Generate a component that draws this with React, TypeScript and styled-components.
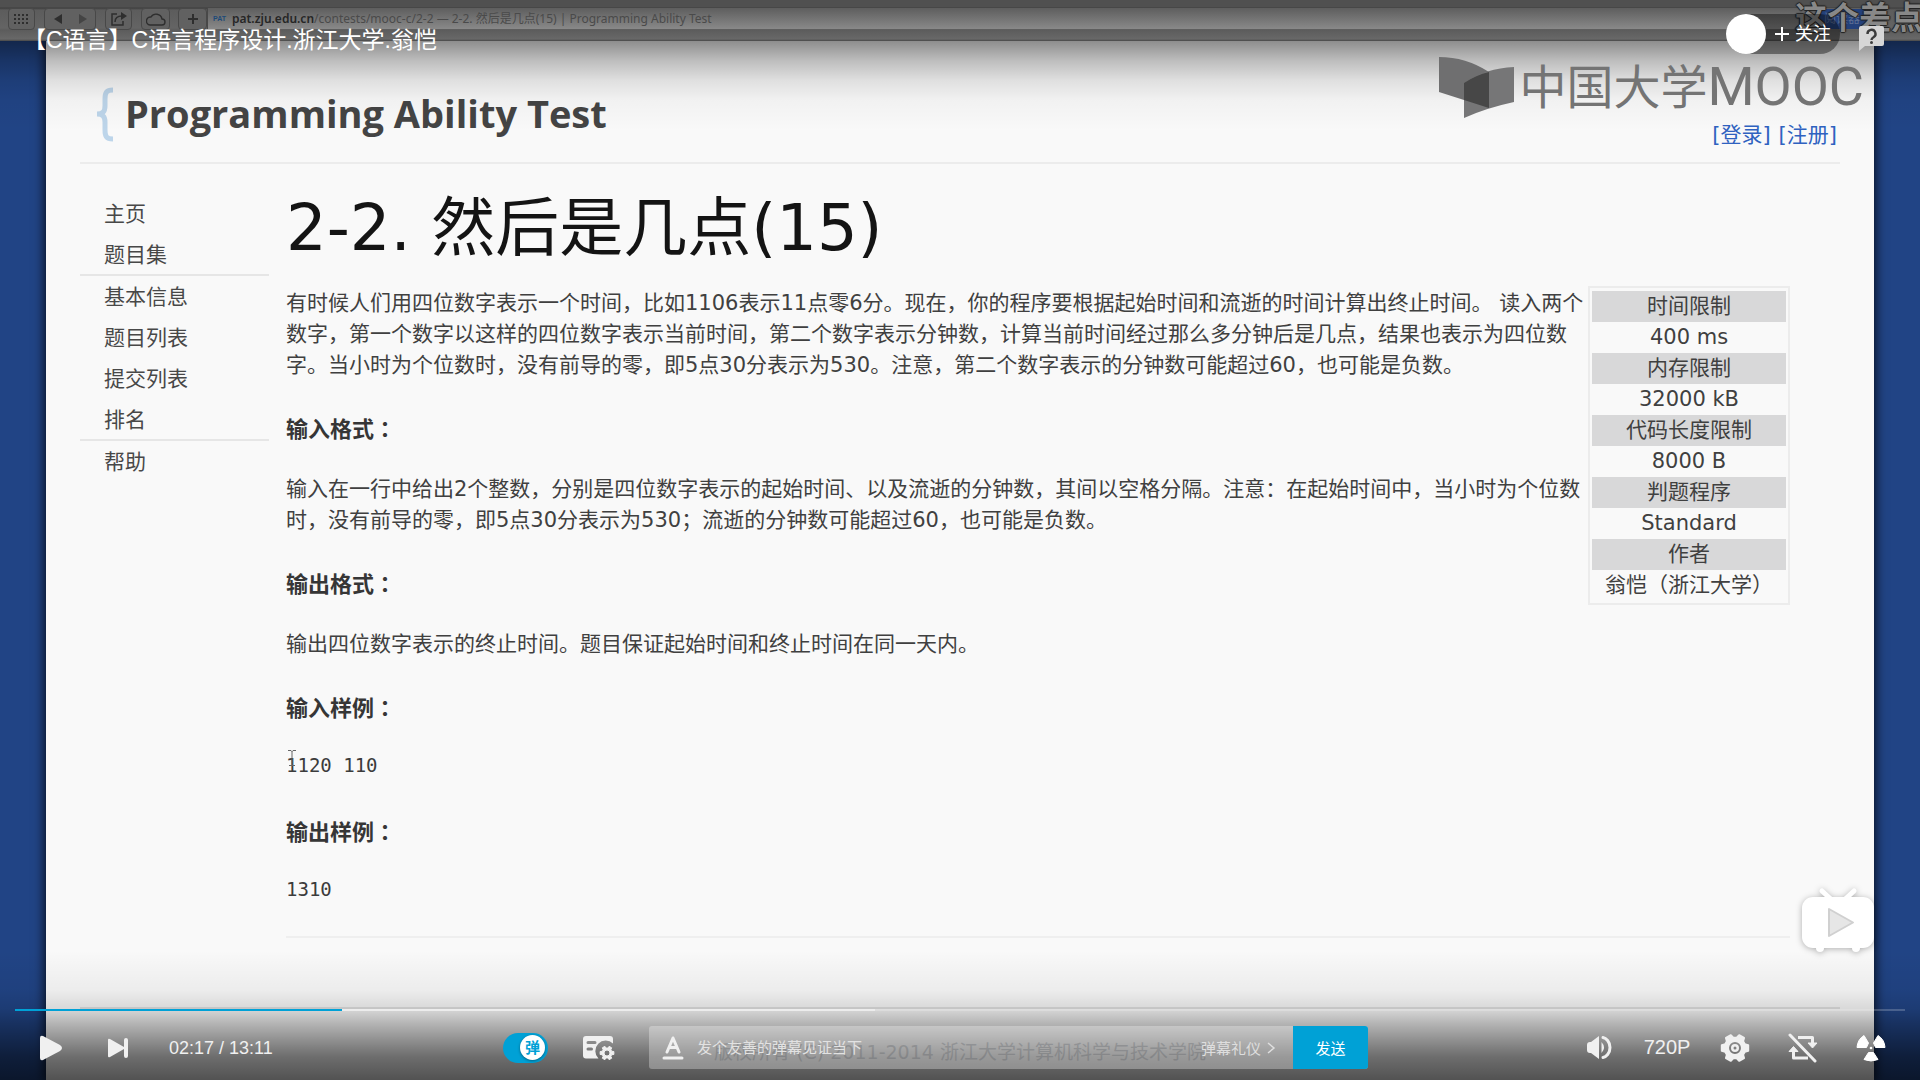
import React, { useState } from "react";
import styled, { createGlobalStyle } from "styled-components";

const videoFont = `"DejaVu Sans", "Noto Sans CJK SC", sans-serif`;
const uiFont = `"Liberation Sans", "Noto Sans CJK SC", sans-serif`;
const accent = "#00a1d6";

const GlobalStyle = createGlobalStyle`
  *, *::before, *::after { box-sizing: border-box; }
  body { margin: 0; background: #000; }
  button, input { font: inherit; color: inherit; border: 0; padding: 0; margin: 0; background: none; }
  button { cursor: pointer; }
  a { text-decoration: none; color: inherit; }
  h1, h2, h3, p, pre, ul { margin: 0; padding: 0; }
`;

/* ---------- video picture ---------- */

const Player = styled.main`
  position: relative;
  min-height: 100vh;
  overflow: hidden;
  display: flex;
  flex-direction: column;
  font-family: ${uiFont};
`;

const Browser = styled.section`
  flex: 1;
  display: flex;
  flex-direction: column;
  background: #214485;
  font-family: ${videoFont};
`;

const BrowserBar = styled.div`
  height: 41px;
  padding-top: 8px;
  display: flex;
  align-items: flex-start;
  background: linear-gradient(#505050 0, #505050 7px, #3e3e3e 8px, #5c5c5c 10px, #646464 28px, #5c5c5c 30px, #686868 39px, #484848 41px);
`;

const BarButton = styled.span<{ $width: number; $gap: number }>`
  width: ${(p) => p.$width}px;
  height: 22px;
  margin-left: ${(p) => p.$gap}px;
  border: 1px solid #484848;
  border-radius: 4px;
  background: #616161;
  display: flex;
  align-items: center;
  justify-content: space-around;
  color: #2e2e2e;
`;

const Address = styled.div`
  flex: 1;
  height: 21px;
  margin-right: 54px;
  padding-left: 5px;
  display: flex;
  align-items: center;
  gap: 6px;
  background: linear-gradient(#5e5e5e, #898989);
  border-left: 1px solid #484848;
  font: 12px/20px "Noto Sans", "Noto Sans CJK SC", sans-serif;
  color: #4a4a4a;
  white-space: nowrap;
  overflow: hidden;
`;

const Favicon = styled.b`
  font: bold 7px/10px "Liberation Sans", sans-serif;
  color: #1d4a78;
`;

const Host = styled.b`
  font-weight: 600;
  color: #262626;
`;

const Reader = styled.span`
  width: 48px;
  margin-left: auto;
  background: #24417b;
  color: #5d6f94;
  text-align: center;
`;

const Desktop = styled.div`
  flex: 1;
  display: flex;
  padding: 0 46px;
  background: #214485;
  overflow: hidden;
`;

const Page = styled.div`
  flex: 1;
  min-width: 0;
  padding: 0 34px;
  display: flex;
  flex-direction: column;
  background: #f9f9f9;
  box-shadow: 0 0 10px 2px rgba(0, 0, 0, 0.75);
`;

const PageHeader = styled.header`
  height: 123px;
  padding: 38px 0 0 13px;
  display: flex;
  justify-content: space-between;
  border-bottom: 2px solid #ececec;
`;

const Brand = styled.div`
  display: flex;
  align-items: flex-start;
  gap: 8px;
  color: #444;
`;

const BrandName = styled.h2`
  font: bold 38px/68px "Open Sans", sans-serif;
`;

const Account = styled.nav`
  display: flex;
  gap: 8px;
  padding: 39px 3px 0 0;
  font-size: 21px;
  line-height: 34px;
  color: #2f62c0;
`;

const Columns = styled.div`
  display: flex;
  gap: 17px;
`;

const SideNav = styled.nav`
  width: 189px;
  padding-top: 30px;
`;

const NavGroup = styled.ul`
  list-style: none;
  padding-left: 24px;
  font-size: 21px;
  line-height: 41px;
  color: #484848;
  & + & {
    margin-top: -2px;
    padding-top: 1px;
    border-top: 2px solid #e6e6e6;
  }
`;

const Article = styled.article`
  flex: 1;
  min-width: 0;
  margin-right: 50px;
  padding: 21px 0 28px;
  font-size: 21px;
  line-height: 31px;
  color: #404040;
  border-bottom: 2px solid #efefef;
`;

const Title = styled.h1`
  font-size: 64px;
  line-height: 86px;
  font-weight: 400;
  color: #141414;
`;

const Problem = styled.div`
  display: flex;
  padding-top: 15px;
`;

const Statement = styled.div`
  flex: 1;
  min-width: 0;
  padding-top: 2px;
  display: flex;
  flex-direction: column;
  gap: 31px;
`;

const SectionTitle = styled.h3`
  height: 31px;
  font-size: 22px;
  line-height: 31px;
  color: #363636;
  span {
    font-family: "Noto Sans CJK JP", sans-serif;
  }
`;

const Sample = styled.pre`
  font: 19px/25px "DejaVu Sans Mono", monospace;
  height: 31px;
  color: #3c3c3c;
`;

const Limits = styled.table`
  width: 202px;
  align-self: flex-start;
  border: 2px solid #ececec;
  border-spacing: 0;
  padding: 3px 2px 2px;
  text-align: center;
  th, td { padding: 0; height: 31px; }
  th { font-weight: 400; background: #d8d8d9; }
`;

const Footer = styled.footer`
  margin-top: 69px;
  padding-top: 28px;
  padding-bottom: 8px;
  border-top: 2px solid #e2e2e2;
  text-align: center;
  font-size: 19px;
  line-height: 31px;
  color: #b4b8be;
`;

const TextCursor = styled.svg`
  position: absolute;
  left: 286px;
  top: 749px;
`;

const Watermark = styled.div`
  position: absolute;
  top: 50px;
  right: 56px;
  display: flex;
  align-items: flex-start;
  gap: 5px;
  color: #747474;
  white-space: nowrap;
  svg {
    margin-top: 6px;
  }
`;

const WatermarkCn = styled.span`
  font: 47px/68px "Noto Sans CJK SC", sans-serif;
`;

const WatermarkEn = styled.span`
  font: 54px/74px Roboto, sans-serif;
  margin-left: -5px;
`;

/* ---------- player chrome ---------- */

const Shade = styled.div<{ $edge: "top" | "bottom" }>`
  position: absolute;
  left: 0;
  right: 0;
  pointer-events: none;
  ${(p) =>
    p.$edge === "top"
      ? `top: 41px; height: 90px;
         background: linear-gradient(rgba(0,0,0,.43), rgba(0,0,0,.24) 22%, rgba(0,0,0,.1) 44%, rgba(0,0,0,.03) 66%, transparent);`
      : `bottom: 0; height: 130px;
         background: linear-gradient(transparent, rgba(0,0,0,.05) 31%, rgba(0,0,0,.13) 45%, rgba(0,0,0,.27) 56%, rgba(0,0,0,.42) 69%, rgba(0,0,0,.56) 82%, rgba(0,0,0,.67));`}
`;

const Danmaku = styled.span`
  position: absolute;
  top: -8px;
  right: -3px;
  font: bold 32px/46px "Noto Sans CJK SC", sans-serif;
  color: #888;
  text-shadow: 1px 0 1px #222, -1px 0 1px #222, 0 1px 1px #222, 0 -1px 1px #222;
`;

const TopBar = styled.header`
  position: absolute;
  top: 14px;
  left: 23px;
  right: 35px;
  display: flex;
  justify-content: space-between;
  color: #fff;
`;

const VideoTitle = styled.h2`
  font-size: 23px;
  line-height: 32px;
  padding-top: 10px;
  font-weight: 400;
`;

const TopActions = styled.div`
  display: flex;
  gap: 18px;
`;

const Follow = styled.button`
  width: 114px;
  height: 40px;
  border-radius: 20px;
  display: flex;
  align-items: center;
  gap: 5px;
  background: rgba(0, 0, 0, 0.4);
  font-size: 18px;
  line-height: 24px;
`;

const Avatar = styled.span`
  width: 40px;
  height: 40px;
  margin-right: 3px;
  border-radius: 50%;
  background: #fff;
`;

const IconButton = styled.button<{ $width?: number }>`
  width: ${(p) => p.$width ?? 27}px;
  height: 48px;
  display: flex;
  align-items: center;
  justify-content: center;
  color: #f0f0f0;
`;

const TvMark = styled.svg`
  position: absolute;
  right: 42px;
  bottom: 124px;
  filter: drop-shadow(0 1px 3px rgba(0, 0, 0, 0.3));
`;

const Controls = styled.footer`
  position: absolute;
  left: 15px;
  right: 15px;
  bottom: 0;
  height: 71px;
  color: #f0f0f0;
`;

const Progress = styled.div`
  height: 2px;
  display: flex;
  background: rgba(255, 255, 255, 0.2);
`;

const Played = styled.div`
  background: ${accent};
`;

const Buffered = styled.div`
  background: rgba(255, 255, 255, 0.45);
`;

const ControlRow = styled.div`
  display: flex;
  align-items: center;
  height: 73px;
`;

const LeftControls = styled.div`
  flex: 10 1 0;
  display: flex;
  align-items: center;
`;

const Time = styled.span`
  padding-left: 19px;
  font-size: 18px;
  line-height: 24px;
`;

const CenterControls = styled.div`
  flex: 0 1 865px;
  display: flex;
  align-items: center;
`;

const RightControls = styled.div`
  flex: 11 1 0;
  display: flex;
  align-items: center;
  justify-content: flex-end;
  font-size: 20px;
`;

const Toggle = styled.label`
  position: relative;
  width: 45px;
  height: 30px;
  border-radius: 15px;
  background: ${accent};
  display: flex;
  align-items: center;
  justify-content: flex-end;
  padding-right: 3px;
  input {
    position: absolute;
    inset: 0;
    opacity: 0;
  }
`;

const Knob = styled.span`
  width: 25px;
  height: 25px;
  border-radius: 50%;
  background: #fff;
  color: ${accent};
  font: bold 15px/24px "Noto Sans CJK SC", sans-serif;
  text-align: center;
  box-shadow: 0 1px 3px rgba(0, 0, 0, 0.4);
`;

const SendBar = styled.form`
  flex: 1;
  min-width: 0;
  height: 43px;
  display: flex;
  align-items: center;
  border-radius: 3px;
  overflow: hidden;
  background: rgba(255, 255, 255, 0.3);
  font-size: 15px;
`;

const SendInput = styled.input`
  flex: 1;
  min-width: 0;
  height: 43px;
  outline: 0;
  &::placeholder { color: #e2e2e2; opacity: 1; }
`;

const Etiquette = styled.a`
  display: flex;
  align-items: center;
  gap: 6px;
  padding-right: 17px;
  color: #dedede;
`;

const Send = styled.button`
  width: 75px;
  height: 43px;
  background: ${accent};
  color: #fff;
`;

const gearPoints = (c: number, outer: number, inner: number, teeth: number, phase = 0) => {
  const step = (Math.PI * 2) / teeth;
  const pts: string[] = [];
  for (let i = 0; i < teeth; i++) {
    const a = i * step + phase;
    [[-0.34, inner], [-0.2, outer], [0.2, outer], [0.34, inner]].forEach(([o, r]) => {
      pts.push(`${(c + r * Math.cos(a + o * step)).toFixed(2)},${(c + r * Math.sin(a + o * step)).toFixed(2)}`);
    });
  }
  return `M${pts.join("L")}Z`;
};

const ring = (c: number, r: number) => `M${c - r},${c}a${r},${r} 0 1,0 ${2 * r},0a${r},${r} 0 1,0 ${-2 * r},0Z`;

const body =
  "有时候人们用四位数字表示一个时间，比如1106表示11点零6分。现在，你的程序要根据起始时间和流逝的时间计算出终止时间。 读入两个数字，第一个数字以这样的四位数字表示当前时间，第二个数字表示分钟数，计算当前时间经过那么多分钟后是几点，结果也表示为四位数字。当小时为个位数时，没有前导的零，即5点30分表示为530。注意，第二个数字表示的分钟数可能超过60，也可能是负数。";

const navGroups = [["主页", "题目集"], ["基本信息", "题目列表", "提交列表", "排名"], ["帮助"]];

const limits = [
  ["时间限制", "400 ms"],
  ["内存限制", "32000 kB"],
  ["代码长度限制", "8000 B"],
  ["判题程序", "Standard"],
  ["作者", "翁恺（浙江大学）"],
];

function Heading({ text }: { text: string }) {
  return (
    <SectionTitle>
      {text}
      <span>：</span>
    </SectionTitle>
  );
}

function VideoPicture() {
  return (
    <Browser>
      <BrowserBar>
        <BarButton $width={27} $gap={8}>
          <svg width="17" height="12" fill="currentColor">
            {[1, 5, 9].map((y) => [1, 5, 9, 13].map((x) => <rect key={`${x}-${y}`} x={x} y={y} width="2" height="2" />))}
          </svg>
        </BarButton>
        <BarButton $width={52} $gap={9}>
          <svg width="10" height="10" fill="currentColor"><path d="M9 0v10L1 5z" /></svg>
          <svg width="10" height="10" fill="#444"><path d="M1 0v10l8-5z" /></svg>
        </BarButton>
        <BarButton $width={27} $gap={9}>
          <svg width="18" height="16" viewBox="0 0 18 16" fill="none" stroke="currentColor" strokeWidth="1.5">
            <path d="M7 3H2v11h11v-4M5 11c0-4 3-6 7-6" /><path d="M11 1l6 4-6 4z" fill="currentColor" stroke="none" />
          </svg>
        </BarButton>
        <BarButton $width={29} $gap={9}>
          <svg width="20" height="15" viewBox="0 0 20 15" fill="none" stroke="currentColor" strokeWidth="1.4">
            <path d="M4 13h12a3 3 0 0 0 0-6 6 6 0 0 0-11-2 4 4 0 0 0-1 8z" />
          </svg>
        </BarButton>
        <BarButton $width={29} $gap={8}>
          <svg width="12" height="12" stroke="currentColor" strokeWidth="2"><path d="M6 1v10M1 6h10" /></svg>
        </BarButton>
        <Address>
          <Favicon>PAT</Favicon>
          <span>
            <Host>pat.zju.edu.cn</Host>/contests/mooc-c/2-2 — 2-2. 然后是几点(15) | Programming Ability Test
          </span>
          <Reader>阅读器</Reader>
        </Address>
      </BrowserBar>
      <Desktop>
        <Page>
          <PageHeader>
            <Brand>
              <svg width="24" height="68" viewBox="0 0 24 68" fill="none" stroke="#bdd5ea" strokeWidth="5">
                <path d="M20 11c-7 0-8 3-8 9v7c0 5-2 8-8 8 6 0 8 3 8 8v8c0 6 1 9 8 9" />
              </svg>
              <BrandName>Programming Ability Test</BrandName>
            </Brand>
            <Account>
              <a href="#login">[登录]</a>
              <a href="#register">[注册]</a>
            </Account>
          </PageHeader>
          <Columns>
            <SideNav>
              {navGroups.map((group) => (
                <NavGroup key={group[0]}>
                  {group.map((item) => (
                    <li key={item}><a href="#nav">{item}</a></li>
                  ))}
                </NavGroup>
              ))}
            </SideNav>
            <Article>
              <Title>2-2. 然后是几点(15)</Title>
              <Problem>
                <Statement>
                  <p>{body}</p>
                  <Heading text="输入格式" />
                  <p>输入在一行中给出2个整数，分别是四位数字表示的起始时间、以及流逝的分钟数，其间以空格分隔。注意：在起始时间中，当小时为个位数时，没有前导的零，即5点30分表示为530；流逝的分钟数可能超过60，也可能是负数。</p>
                  <Heading text="输出格式" />
                  <p>输出四位数字表示的终止时间。题目保证起始时间和终止时间在同一天内。</p>
                  <Heading text="输入样例" />
                  <Sample>1120 110</Sample>
                  <Heading text="输出样例" />
                  <Sample>1310</Sample>
                </Statement>
                <Limits>
                  <tbody>
                    {limits.map(([name, value]) => (
                      <React.Fragment key={name}>
                        <tr><th scope="row">{name}</th></tr>
                        <tr><td>{value}</td></tr>
                      </React.Fragment>
                    ))}
                  </tbody>
                </Limits>
              </Problem>
            </Article>
          </Columns>
          <Footer>版权所有 (C) 2011-2014 浙江大学计算机科学与技术学院</Footer>
        </Page>
      </Desktop>
    </Browser>
  );
}

export default function App() {
  const [danmaku, setDanmaku] = useState(true);
  const [text, setText] = useState("");
  const played = (137 / 791) * 100;

  return (
    <Player>
      <GlobalStyle />
      <VideoPicture />
      <TextCursor width="12" height="18" fill="none" stroke="#666">
        <path d="M2 1.500h3l1 1 1-1h3M6 2v14M3 16.500h6" />
      </TextCursor>
      <Shade $edge="top" />
      <Shade $edge="bottom" />
      <Watermark>
        <svg width="76" height="64" viewBox="0 0 76 64">
          <path d="M1 1Q28 1 51 16V52L1 36Z" fill="#6f6f70" />
          <path d="M26 27Q48 12 76 11V46Q48 52 26 62Z" fill="#767677" />
          <path d="M26 27Q38 19 51 16V52L26 44Z" fill="#474747" />
        </svg>
        <WatermarkCn>中国大学</WatermarkCn>
        <WatermarkEn>MOOC</WatermarkEn>
      </Watermark>
      <Danmaku>这个差点</Danmaku>

      <TopBar>
        <VideoTitle>【C语言】C语言程序设计.浙江大学.翁恺</VideoTitle>
        <TopActions>
          <Follow type="button">
            <Avatar />
            <svg width="16" height="16" stroke="#fff" strokeWidth="2"><path d="M8 1v14M1 8h14" /></svg>
            关注
          </Follow>
          <IconButton type="button" aria-label="帮助" $width={27}>
            <svg width="27" height="27" viewBox="0 0 27 27">
              <path d="M3 1h21a2 2 0 0 1 2 2v16a2 2 0 0 1-2 2H7l-6 5V3a2 2 0 0 1 2-2z" fill="#d6d6d6" />
              <path d="M9.500 9a4 4 0 1 1 6 3.300c-1.500.9-2 1.400-2 2.700" fill="none" stroke="#3c3c3c" strokeWidth="2.400" />
              <circle cx="13.500" cy="17.500" r="1.500" fill="#3c3c3c" />
            </svg>
          </IconButton>
        </TopActions>
      </TopBar>

      <TvMark width="82" height="72" viewBox="0 0 82 72">
        <path d="M26 7l12 11M58 7L46 18" stroke="#fff" strokeWidth="5" strokeLinecap="round" />
        <circle cx="24" cy="64" r="4" fill="#fff" />
        <circle cx="60" cy="64" r="4" fill="#fff" />
        <rect x="6" y="13" width="72" height="51" rx="11" fill="#fff" />
        <path d="M33 25v27l24-13.500z" fill="#e6e6e6" stroke="#d0d0d0" strokeWidth="2" strokeLinejoin="round" />
      </TvMark>

      <Controls>
        <Progress>
          <Played style={{ width: `${played}%` }} />
          <Buffered style={{ width: "28.2%" }} />
        </Progress>
        <ControlRow>
          <LeftControls>
            <IconButton type="button" aria-label="播放" $width={71}>
              <svg width="24" height="26" viewBox="0 0 24 26" fill="currentColor">
                <path d="M1 3q0-3 3-2L21 10q4 3 0 6L4 25q-3 1-3-2z" />
              </svg>
            </IconButton>
            <IconButton type="button" aria-label="下一个" $width={64}>
              <svg width="20" height="20" viewBox="0 0 20 20" fill="currentColor">
                <path d="M0 2q0-2 2-1l14 8V2q0-2 2-2t2 2v16q0 2-2 2t-2-2v-7L2 19q-2 1-2-1z" />
              </svg>
            </IconButton>
            <Time>02:17 / 13:11</Time>
          </LeftControls>
          <CenterControls>
            <Toggle>
              <input type="checkbox" aria-label="弹幕开关" checked={danmaku} onChange={(e) => setDanmaku(e.target.checked)} />
              <Knob>弹</Knob>
            </Toggle>
            <IconButton type="button" aria-label="弹幕设置" $width={101}>
              <svg width="32" height="26" viewBox="0 0 32 26" fill="currentColor">
                <path
                  fillRule="evenodd"
                  d="M3 1H27a3 3 0 0 1 3 3V8.500A9.500 9.500 0 0 0 15.500 23.500H3a3 3 0 0 1-3-3V4A3 3 0 0 1 3 1zM5 6a1.300 1.300 0 0 0 0 3h7a1.300 1.300 0 0 0 0-3zM5 12.500a1.300 1.300 0 0 0 0 3h3.500a1.300 1.300 0 0 0 0-3z"
                />
                <g transform="translate(16 10)">
                  <path fillRule="evenodd" stroke="currentColor" strokeLinejoin="round" d={gearPoints(8, 7, 5, 6) + ring(8, 3)} />
                </g>
              </svg>
            </IconButton>
            <SendBar onSubmit={(e) => e.preventDefault()}>
              <IconButton type="button" aria-label="字体" $width={48}>
                <svg width="22" height="24" viewBox="0 0 22 24" fill="none" stroke="currentColor" strokeLinecap="round" strokeLinejoin="round" strokeWidth="3">
                  <path d="M5 16L11 2l6 14M7 11.500h8M2 22h18" />
                </svg>
              </IconButton>
              <SendInput
                aria-label="弹幕"
                placeholder="发个友善的弹幕见证当下"
                value={text}
                onChange={(e) => setText(e.target.value)}
              />
              <Etiquette href="#etiquette">
                弹幕礼仪
                <svg width="9" height="12" fill="none" stroke="currentColor" strokeWidth="1.500"><path d="M1 1l6 5-6 5" /></svg>
              </Etiquette>
              <Send type="submit">发送</Send>
            </SendBar>
          </CenterControls>
          <RightControls>
            <IconButton type="button" aria-label="音量" $width={68}>
              <svg width="27" height="25" viewBox="0 0 27 25" fill="currentColor">
                <path d="M13 1v23L5 18H4q-3 0-3-3V10q0-3 3-3h1z" />
                <path d="M15.500 7q5 5.500 0 11z" />
                <path d="M17 2.500c3 .5 7 4 7 10s-4 9.500-7 10" fill="none" stroke="currentColor" strokeWidth="3" strokeLinecap="round" />
              </svg>
            </IconButton>
            <IconButton type="button" $width={68}>720P</IconButton>
            <IconButton type="button" aria-label="设置" $width={68}>
              <svg width="30" height="30" viewBox="0 0 30 30" fill="currentColor">
                <path fillRule="evenodd" stroke="currentColor" strokeWidth="2" strokeLinejoin="round" d={gearPoints(15, 13.5, 10.5, 6) + ring(15, 7)} />
                <path fillRule="evenodd" d={ring(15, 4) + ring(15, 1.5)} />
              </svg>
            </IconButton>
            <IconButton type="button" aria-label="洗脑循环" $width={68}>
              <svg width="30" height="30" viewBox="0 0 30 30" fill="none" stroke="currentColor" strokeWidth="3" strokeLinejoin="round">
                <path d="M10 4.500h14.500V11M20 25H5.500V18" />
                <path d="M20 10h9l-4.500 5zM1 18.500h9l-4.500-5z" fill="currentColor" strokeWidth="1" />
                <path d="M2 2l25 26" strokeLinecap="round" />
              </svg>
            </IconButton>
            <IconButton type="button" aria-label="全屏" $width={68}>
              <svg width="30" height="28" viewBox="0 0 30 28" fill="#fff" stroke="#fff" strokeLinejoin="round">
                <circle cx="15" cy="14" r="1.300" stroke="none" />
                <path d="M8 1.500L12.500 9 10.500 13.500H1Q1.500 5.500 8 1.500zM22 1.500L17.500 9l2 4.500H29Q28.500 5.500 22 1.500zM12.500 18.500h5l4.500 7q-7 3-14 0z" />
              </svg>
            </IconButton>
          </RightControls>
        </ControlRow>
      </Controls>
    </Player>
  );
}
